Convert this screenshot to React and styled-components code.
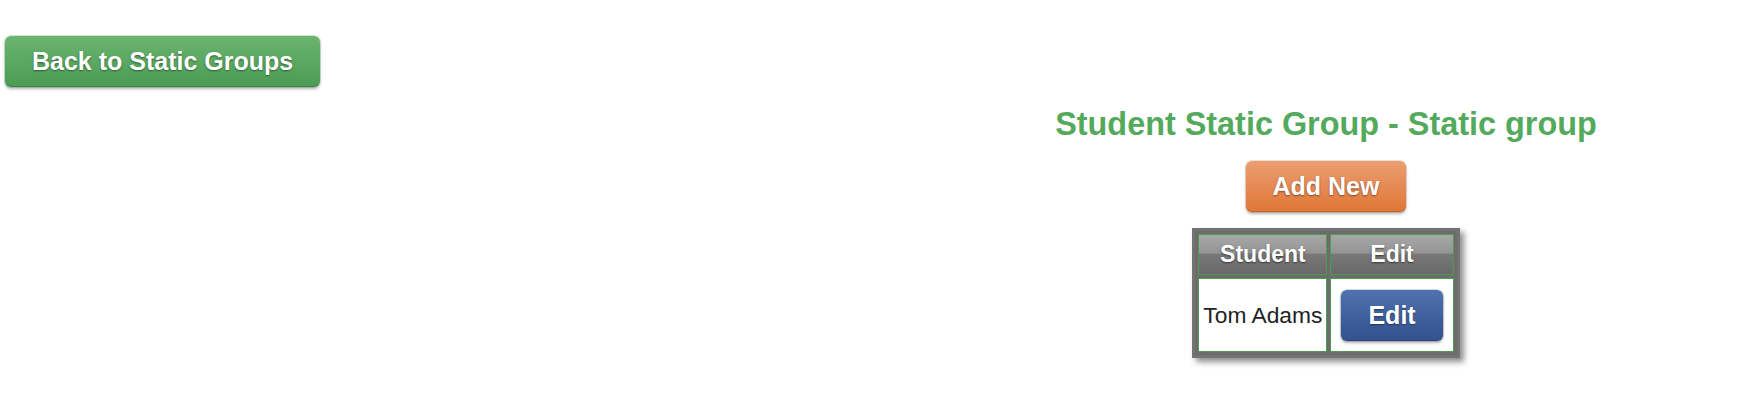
import React from 'react';
import styled, { createGlobalStyle, css } from 'styled-components';

const GlobalStyle = createGlobalStyle`
  html, body {
    margin: 0;
    padding: 0;
    background: #fff;
    font-family: "Liberation Sans", Arial, Helvetica, sans-serif;
  }
`;

const Page = styled.div`
  padding: 36px 0 40px 5px;
  display: flex;
  flex-direction: column;
`;

const buttonColors = {
  green: ['#6ab570', '#4b9b53', '#3f8846'],
  orange: ['#ec9e72', '#e07636', '#c9682e'],
  blue: ['#4f71ae', '#33528f', '#2b467c'],
};

const Button = styled.button`
  align-self: ${(p) => (p.$left ? 'flex-start' : 'center')};
  font-family: inherit;
  font-size: 25px;
  font-weight: bold;
  line-height: 29px;
  color: #fff;
  padding: 11px 27px;
  border: none;
  border-radius: 6px;
  cursor: pointer;
  text-shadow: 0 1px 2px rgba(0, 0, 0, 0.45);
  box-shadow: 0 2px 3px rgba(0, 0, 0, 0.3), inset 0 -1px 0 rgba(0, 0, 0, 0.15);
  ${(p) => {
    const [top, bottom, edge] = buttonColors[p.$color];
    return css`
      background: linear-gradient(to bottom, ${top} 0%, ${bottom} 100%);
      outline: 1px solid ${edge}33;
    `;
  }}
`;

const Section = styled.section`
  width: 840px;
  margin-left: auto;
  display: flex;
  flex-direction: column;
  align-items: center;
`;

const Title = styled.h2`
  margin: 19px 0 18px;
  font-size: 32.4px;
  font-weight: bold;
  color: #54aa5c;
  white-space: nowrap;
`;

const Table = styled.table`
  margin-top: 16px;
  border: 3px solid #737373;
  border-spacing: 3px;
  background: #6c6c6c;
  box-shadow: 4px 4px 6px rgba(0, 0, 0, 0.45);
`;

const HeadCell = styled.th`
  height: 39px;
  padding: 0 ${(p) => p.$pad}px;
  border: 1px solid #4f9a52;
  font-size: 23px;
  font-weight: bold;
  color: #fff;
  text-shadow: 0 1px 2px rgba(0, 0, 0, 0.55);
  background: linear-gradient(
    to bottom,
    #a8a8a8 0%,
    #949494 46%,
    #787878 50%,
    #6a6a6a 100%
  );
`;

const Cell = styled.td`
  height: 72px;
  padding: 0 ${(p) => p.$pad}px;
  border: 1px solid #4f9a52;
  background: #fff;
  font-size: 22.8px;
  color: #222;
  text-align: center;
  white-space: nowrap;
`;

const rows = [{ student: 'Tom Adams' }];

export default function App() {
  return (
    <>
      <GlobalStyle />
      <Page>
        <Button $left $color="green">Back to Static Groups</Button>
        <Section>
          <Title>Student Static Group - Static group</Title>
          <Button $color="orange">Add New</Button>
          <Table>
            <thead>
              <tr>
                <HeadCell $pad={4}>Student</HeadCell>
                <HeadCell $pad={10}>Edit</HeadCell>
              </tr>
            </thead>
            <tbody>
              {rows.map((r) => (
                <tr key={r.student}>
                  <Cell $pad={4}>{r.student}</Cell>
                  <Cell $pad={10}>
                    <Button $color="blue">Edit</Button>
                  </Cell>
                </tr>
              ))}
            </tbody>
          </Table>
        </Section>
      </Page>
    </>
  );
}
